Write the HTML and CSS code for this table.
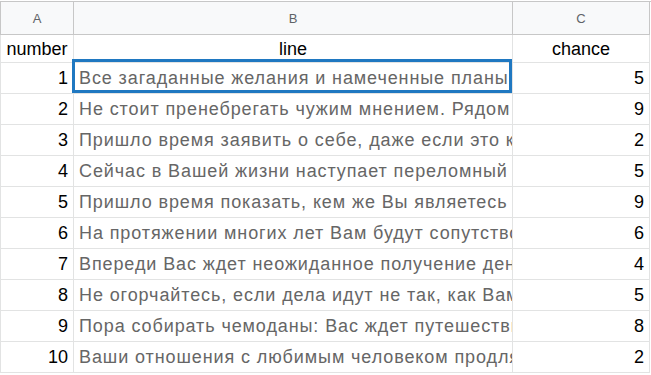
FILE: index.html
```html
<!DOCTYPE html>
<html lang="ru">
<head>
<meta charset="utf-8">
<title>Sheet</title>
<link rel="stylesheet" href="styles.css">
</head>
<body>
<div class="sheet">
  <div class="grid">
    <div class="hd first">A</div>
    <div class="hd">B</div>
    <div class="hd">C</div>

    <div class="c first title num-row">number</div>
    <div class="c center num-row">line</div>
    <div class="c center num-row">chance</div>

    <div class="c first r">1</div><div class="c txt"><span class="clip">Все загаданные желания и намеченные планы сбудутся</span></div><div class="c r">5</div>
    <div class="c first r">2</div><div class="c txt"><span class="clip">Не стоит пренебрегать чужим мнением. Рядом с вами</span></div><div class="c r">9</div>
    <div class="c first r">3</div><div class="c txt"><span class="clip">Пришло время заявить о себе, даже если это кажется</span></div><div class="c r">2</div>
    <div class="c first r">4</div><div class="c txt"><span class="clip">Сейчас в Вашей жизни наступает переломный момент</span></div><div class="c r">5</div>
    <div class="c first r">5</div><div class="c txt"><span class="clip">Пришло время показать, кем же Вы являетесь</span></div><div class="c r">9</div>
    <div class="c first r">6</div><div class="c txt"><span class="clip">На протяжении многих лет Вам будут сопутствовать удачи</span></div><div class="c r">6</div>
    <div class="c first r">7</div><div class="c txt"><span class="clip">Впереди Вас ждет неожиданное получение денег</span></div><div class="c r">4</div>
    <div class="c first r">8</div><div class="c txt"><span class="clip">Не огорчайтесь, если дела идут не так, как Вам хочется</span></div><div class="c r">5</div>
    <div class="c first r">9</div><div class="c txt"><span class="clip">Пора собирать чемоданы: Вас ждет путешествие</span></div><div class="c r">8</div>
    <div class="c first r">10</div><div class="c txt"><span class="clip">Ваши отношения с любимым человеком продлятся долго</span></div><div class="c r">2</div>
  </div>
  <div class="selection"></div>
</div>
</body>
</html>
```

FILE: styles.css
```css
html, body {
  margin: 0;
  padding: 0;
  background: #ffffff;
}

.sheet {
  position: relative;
  padding-top: 1px;
  width: 651px;
  height: 374px;
  overflow: hidden;
  font-family: "Liberation Sans", Arial, sans-serif;
}

.grid {
  display: grid;
  grid-template-columns: 74px 439px 137px;
  grid-auto-rows: 31px;
  grid-template-rows: 33px 28px;
  border-top: 1px solid #c7c7c7;
}

.hd {
  background: #f8f9fa;
  border-right: 1px solid #c7c7c7;
  border-bottom: 1px solid #c7c7c7;
  color: #5f6368;
  font-size: 13px;
  display: flex;
  align-items: center;
  justify-content: center;
}

.hd.first {
  border-left: 1px solid #c7c7c7;
}

.c {
  border-right: 1px solid #e2e3e3;
  border-bottom: 1px solid #e2e3e3;
  font-size: 18px;
  color: #000;
  display: flex;
  align-items: center;
  padding: 0 5px;
  white-space: nowrap;
  overflow: hidden;
}

.c.first {
  border-left: 1px solid #e2e3e3;
}

.num-row {
  padding-top: 1px;
}

.title {
  justify-content: center;
  padding: 1px 3px 0;
}

.center {
  justify-content: center;
}

.r {
  justify-content: flex-end;
}

.txt {
  color: #666666;
  justify-content: flex-start;
  padding-right: 0;
}

.clip {
  display: block;
  overflow: hidden;
  white-space: nowrap;
  letter-spacing: 0.9px;
  min-width: 0;
  flex: 1 1 auto;
}

.selection {
  position: absolute;
  left: 72px;
  top: 59px;
  width: 440px;
  height: 34px;
  box-sizing: border-box;
  border: 3px solid #1f78c1;
  pointer-events: none;
}
```
